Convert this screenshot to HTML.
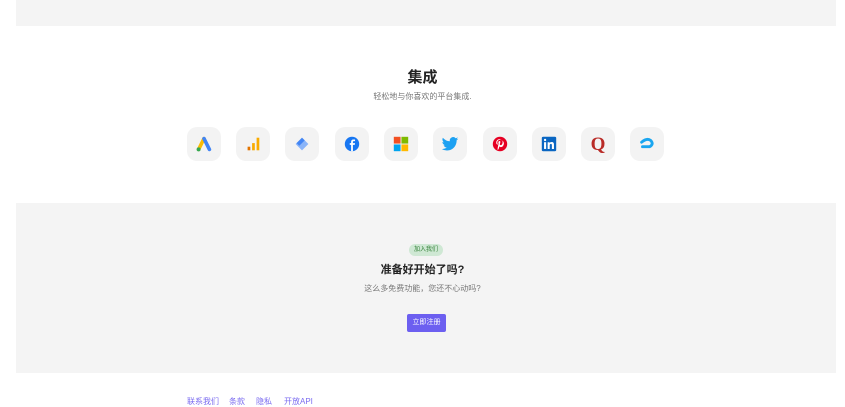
<!DOCTYPE html>
<html><head><meta charset="utf-8"><style>
body{margin:0;width:845px;height:403px;overflow:hidden;background:#fff;font-family:"Liberation Sans","Noto Sans CJK SC",sans-serif;position:relative}
.band{position:absolute;left:16px;width:820px;background:#f4f4f4}
.c{position:absolute;left:0;width:845px;text-align:center}
.ic{position:absolute;top:127px;width:34px;height:34px;border-radius:10px;background:#f3f3f3;display:flex;align-items:center;justify-content:center}
.ic svg{width:18px;height:18px}
.f{position:absolute;top:396px;font-size:8px;color:#7b6cf0}
</style></head><body>
<div class="band" style="top:0;height:26px"></div>
<div class="c" style="top:66px;font-size:15px;font-weight:bold;color:#222">集成</div>
<div class="c" style="top:91px;font-size:8px;color:#777">轻松地与你喜欢的平台集成.</div>

<div class="ic" style="left:187px"><svg viewBox="0 0 20 20"><path d="M4 16 L10 4" stroke="#fbbc04" stroke-width="4" stroke-linecap="round"/><path d="M10 4 L16 16" stroke="#4285f4" stroke-width="4" stroke-linecap="round"/><circle cx="4" cy="16" r="2.2" fill="#34a853"/></svg></div>
<div class="ic" style="left:236px"><svg viewBox="0 0 20 20"><rect x="4" y="13" width="3" height="4" fill="#e37400"/><rect x="9" y="9" width="3" height="8" fill="#f9ab00"/><rect x="14" y="3" width="3" height="14" fill="#f9ab00"/></svg></div>
<div class="ic" style="left:285px"><svg viewBox="0 0 20 20"><rect x="5" y="5" width="10" height="10" transform="rotate(45 10 10)" fill="#8ab4f8"/><path d="M10 3 L13 6 L7 12 L4 9Z" fill="#4285f4"/></svg></div>
<div class="ic" style="left:335px"><svg viewBox="0 0 20 20"><circle cx="10" cy="10" r="8" fill="#1877f2"/><path d="M11 18V11h2l.4-2H11V7.8c0-.6.3-1 1-1h1.4V5h-2C9.9 5 9 6 9 7.5V9H7.5v2H9v7z" fill="#fff"/></svg></div>
<div class="ic" style="left:384px"><svg viewBox="0 0 20 20"><rect x="2" y="2" width="7.5" height="7.5" fill="#f25022"/><rect x="10.5" y="2" width="7.5" height="7.5" fill="#7fba00"/><rect x="2" y="10.5" width="7.5" height="7.5" fill="#00a4ef"/><rect x="10.5" y="10.5" width="7.5" height="7.5" fill="#ffb900"/></svg></div>
<div class="ic" style="left:433px"><svg viewBox="0 0 24 24"><path d="M23 5c-.8.4-1.7.6-2.6.7.9-.6 1.6-1.4 2-2.5-.9.5-1.9.9-2.9 1.1A4.5 4.5 0 0 0 11.8 8.4 12.8 12.8 0 0 1 2.5 3.7a4.5 4.5 0 0 0 1.4 6c-.7 0-1.4-.2-2-.6 0 2.2 1.6 4 3.6 4.4-.7.2-1.4.2-2 .1.6 1.8 2.2 3.1 4.2 3.1A9 9 0 0 1 1 18.6 12.8 12.8 0 0 0 8 20.6c8.3 0 12.8-6.9 12.8-12.8v-.6c.9-.6 1.6-1.4 2.2-2.2z" fill="#1da1f2"/></svg></div>
<div class="ic" style="left:483px"><svg viewBox="0 0 20 20"><circle cx="10" cy="10" r="8" fill="#e60023"/><path d="M10.3 4.5c-3 0-4.5 2.1-4.5 3.9 0 1.1.4 2 1.3 2.4.1.1.3 0 .3-.2l.1-.5c0-.2 0-.2-.1-.4-.3-.3-.4-.7-.4-1.3 0-1.7 1.2-3.1 3.2-3.1 1.8 0 2.7 1.1 2.7 2.5 0 1.9-.8 3.5-2.1 3.5-.7 0-1.2-.6-1-1.3.2-.8.6-1.7.6-2.3 0-.5-.3-1-.9-1-.7 0-1.3.7-1.3 1.7 0 .6.2 1 .2 1L7.5 14c-.2 1-.1 2.200 0 3l.4-.6c.3-.5.8-1.500 1-2.300l.4-1.400c.3.4.9.8 1.600.8 2 0 3.400-1.900 3.400-4.300 0-1.900-1.600-3.700-4-3.700z" fill="#fff"/></svg></div>
<div class="ic" style="left:532px"><svg viewBox="0 0 20 20"><rect x="2" y="2" width="16" height="16" rx="1.5" fill="#0a66c2"/><rect x="4.5" y="8" width="2.3" height="7.5" fill="#fff"/><circle cx="5.65" cy="5.5" r="1.3" fill="#fff"/><path d="M8.5 8h2.2v1c.4-.7 1.200-1.200 2.300-1.200 2 0 2.500 1.300 2.500 3v4.700h-2.300v-4.200c0-.8-.2-1.500-1-1.500s-1.400.6-1.400 1.500v4.200H8.500z" fill="#fff"/></svg></div>
<div class="ic" style="left:581px"><span style="font-family:'Liberation Serif',serif;font-weight:bold;font-size:19px;color:#b92b27;line-height:1">Q</span></div>
<div class="ic" style="left:630px"><svg viewBox="0 0 20 20"><path d="M4 8 Q10 3 14 6 Q18 10 13 13 L5 13" stroke="#1aa6f0" stroke-width="3.2" fill="none" stroke-linecap="round"/></svg></div>

<div class="band" style="top:203px;height:170px"></div>
<div style="position:absolute;left:409px;top:244px;width:34px;height:12px;border-radius:6px;background:#cfe8d4;color:#2e7d32;font-size:6px;text-align:center;line-height:12px">加入我们</div>
<div class="c" style="top:261px;font-size:11px;font-weight:bold;color:#222">准备好开始了吗?</div>
<div class="c" style="top:283px;font-size:8px;color:#777">这么多免费功能，您还不心动吗?</div>
<div style="position:absolute;left:407px;top:314px;width:39px;height:18px;border-radius:2px;background:#6c5ff0;color:#fff;font-size:7px;text-align:center;line-height:18px">立即注册</div>

<div class="f" style="left:187px">联系我们</div>
<div class="f" style="left:229px">条款</div>
<div class="f" style="left:256px">隐私</div>
<div class="f" style="left:284px">开放API</div>
</body></html>
